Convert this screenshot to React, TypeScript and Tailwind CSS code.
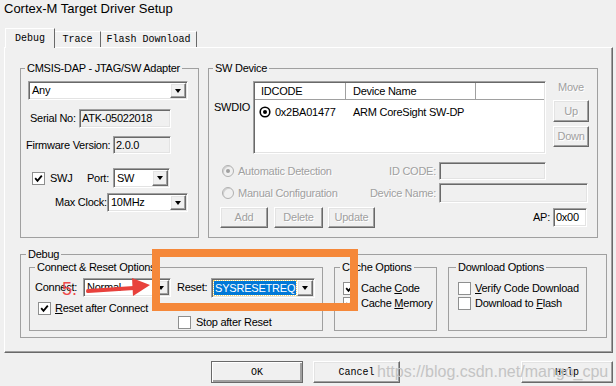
import type { ReactNode } from "react";

const SUNKEN =
  "border border-t-[#a0a0a0] border-l-[#a0a0a0] border-b-white border-r-white shadow-[inset_1px_1px_0_#696969,inset_-1px_-1px_0_#e3e3e3] p-[1px]";
const RAISED =
  "border border-t-white border-l-white border-b-[#696969] border-r-[#696969] shadow-[inset_-1px_-1px_0_#a0a0a0,inset_1px_1px_0_#e3e3e3]";
const DIS = "text-[#a0a0a0] [text-shadow:1px_1px_0_#ffffff]";
const MONO = "font-['Liberation_Mono','Courier_New',monospace] text-[10px] tracking-normal";

function Group({ title, className, legend = "ml-[4px]", children }: { title: string; className: string; legend?: string; children?: ReactNode }) {
  return (
    <fieldset className={`border border-[#a0a0a0] shrink-0 ${className}`}>
      <legend className={`${legend} px-[2px] leading-[13px] whitespace-nowrap`}>{title}</legend>
      {children}
    </fieldset>
  );
}

function Arrow() {
  return (
    <div className={`${RAISED} w-[16px] bg-[#f0f0f0] flex items-center justify-center shrink-0`}>
      <div className="w-0 h-0 border-x-[3.5px] border-x-transparent border-t-[4px] border-t-black" />
    </div>
  );
}

function Combo({ className, children }: { className: string; children?: ReactNode }) {
  return (
    <div className={`${SUNKEN} bg-white flex shrink-0 ${className}`}>
      <div className="flex-1 flex items-center pl-[2px] overflow-hidden whitespace-nowrap">{children}</div>
      <Arrow />
    </div>
  );
}

function Field({ className, children }: { className: string; children?: ReactNode }) {
  return <div className={`${SUNKEN} flex items-center pl-[2px] shrink-0 whitespace-nowrap ${className}`}>{children}</div>;
}

function Btn({ className, children, disabled }: { className: string; children: ReactNode; disabled?: boolean }) {
  return (
    <div className={`${RAISED} flex items-center justify-center shrink-0 ${disabled ? DIS : ""} ${className}`}>
      {children}
    </div>
  );
}

function Check({ on }: { on?: boolean }) {
  return (
    <div className="w-[13px] h-[13px] border border-[#8e8f8f] bg-white flex items-center justify-center shrink-0">
      {on && (
        <svg width="9" height="9" viewBox="0 0 9 9">
          <path d="M1.2 4.2 L3.5 6.8 L7.8 1.6" fill="none" stroke="#000" strokeWidth="1.8" />
        </svg>
      )}
    </div>
  );
}

function Radio({ on }: { on?: boolean }) {
  return (
    <div className="w-[12px] h-[12px] rounded-full border border-[#b0b0b0] bg-[#f0f0f0] shadow-[inset_1px_1px_0_#d0d0d0] flex items-center justify-center shrink-0">
      {on && <div className="w-[4px] h-[4px] rounded-full bg-[#a0a0a0]" />}
    </div>
  );
}

export default function App() {
  return (
    <div className="relative w-[616px] h-[386px] overflow-hidden bg-[#f0f0f0] text-black text-[11px] leading-[13px] tracking-[-0.25px] font-['Liberation_Sans',Arial,sans-serif]">
      <div className="h-[28px] pl-[4px] pt-[1px] text-[13px] leading-[16px] tracking-normal">Cortex-M Target Driver Setup</div>

      {/* tabs */}
      <div className={`flex items-end h-[19px] ml-[5px] ${MONO}`}>
        <div className="relative z-10 -mb-[1px] w-[50px] h-[20px] bg-[#f0f0f0] border-t border-l border-r border-t-white border-l-white border-r-[#696969] flex items-center justify-center">
          Debug
        </div>
        <div className="w-[46px] h-[16px] border-t border-r border-t-white border-r-[#696969] flex items-center justify-center">Trace</div>
        <div className="w-[96px] h-[16px] border-t border-r border-t-white border-r-[#696969] flex items-center justify-center">
          Flash Download
        </div>
      </div>

      {/* tab panel */}
      <div className="ml-[4px] w-[609px] h-[306px] border border-t-white border-l-white border-r-[#696969] border-b-[#696969] shadow-[inset_-1px_-1px_0_#a0a0a0] pl-[15px] pt-[14px] whitespace-nowrap">
        <div className="flex">
          <Group title="CMSIS-DAP - JTAG/SW Adapter" className="w-[179px] h-[176px]">
            <Combo className="mt-[6px] ml-[7px] w-[160px] h-[19px]">Any</Combo>
            <div className="flex items-center mt-[9px]">
              <span className="ml-[9px] w-[49px]">Serial No:</span>
              <Field className="w-[92px] h-[19px]">ATK-05022018</Field>
            </div>
            <div className="flex items-center mt-[8px]">
              <span className="ml-[5px] w-[87px]">Firmware Version:</span>
              <Field className="w-[58px] h-[18px]">2.0.0</Field>
            </div>
            <div className="flex items-center mt-[14px]">
              <div className="ml-[11px]">
                <Check on />
              </div>
              <span className="ml-[5px] w-[37px]">SWJ</span>
              <span className="w-[26px]">Port:</span>
              <Combo className="w-[57px] h-[20px]">SW</Combo>
            </div>
            <div className="flex items-center mt-[5px]">
              <span className="ml-[34px] w-[52px]">Max Clock:</span>
              <Combo className="w-[81px] h-[19px]">10MHz</Combo>
            </div>
          </Group>

          <Group title="SW Device" className="ml-[9px] w-[390px] h-[176px]">
            <div className="flex mt-[6px]">
              <div className="ml-[5px] w-[39px] pt-[20px]">SWDIO</div>
              <div className={`${SUNKEN} w-[293px] h-[73px] bg-white shrink-0`}>
                <div className="flex h-[17px] bg-white">
                  <div className="w-[91px] border-r border-b border-r-[#a0a0a0] border-b-[#a0a0a0] pl-[6px] flex items-center">IDCODE</div>
                  <div className="w-[130px] border-r border-b border-r-[#a0a0a0] border-b-[#a0a0a0] pl-[7px] flex items-center">Device Name</div>
                  <div className="flex-1 border-b border-b-[#a0a0a0]" />
                </div>
                <div className="flex h-[16px] mt-[4px]">
                  <div className="w-[91px] pl-[4px] flex items-center">
                    <svg width="12" height="12" viewBox="0 0 12 12">
                      <circle cx="6" cy="6" r="4.8" fill="#fff" stroke="#000" strokeWidth="1.6" />
                      <circle cx="6" cy="6" r="2" fill="#000" />
                    </svg>
                    <span className="ml-[4px]">0x2BA01477</span>
                  </div>
                  <div className="pl-[7px] flex items-center">ARM CoreSight SW-DP</div>
                </div>
              </div>
              <div className="ml-[7px] w-[36px] flex flex-col items-center">
                <div className={`h-[13px] ${DIS}`}>Move</div>
                <Btn disabled className="mt-[6px] w-[36px] h-[22px]">Up</Btn>
                <Btn disabled className="mt-[4px] w-[36px] h-[21px]">Down</Btn>
              </div>
            </div>

            <div className="flex items-center mt-[8px] h-[18px]">
              <div className={`ml-[13px] w-[140px] flex items-center ${DIS}`}>
                <Radio on />
                <span className="ml-[4px]">Automatic Detection</span>
              </div>
              <span className={`w-[77px] text-right pr-[3px] ${DIS}`}>ID CODE:</span>
              <Field className="w-[107px] h-[18px]" />
            </div>
            <div className="flex items-center mt-[3px] h-[20px]">
              <div className={`ml-[13px] w-[140px] flex items-center ${DIS}`}>
                <Radio />
                <span className="ml-[4px]">Manual Configuration</span>
              </div>
              <span className={`w-[77px] text-right pr-[3px] ${DIS}`}>Device Name:</span>
              <Field className="w-[149px] h-[20px]" />
            </div>
            <div className="flex items-center mt-[4px] h-[21px]">
              <Btn disabled className="ml-[11px] w-[48px] h-[21px]">Add</Btn>
              <Btn disabled className="ml-[6px] w-[49px] h-[21px]">Delete</Btn>
              <Btn disabled className="ml-[5px] w-[47px] h-[21px]">Update</Btn>
              <span className="ml-auto mr-[3px]">AP:</span>
              <Field className="w-[34px] h-[19px] mr-[10px] bg-white">0x00</Field>
            </div>
          </Group>
        </div>

        <Group title="Debug" legend="ml-[5px]" className="mt-[10px] w-[587px] h-[90px]">
          <div className="flex">
            <Group title="Connect & Reset Options" legend="ml-[5px]" className="ml-[8px] w-[294px] h-[70px]">
              <div className="flex items-center mt-[4px] h-[19px]">
                <span className="ml-[5px] w-[48px]">Connect:</span>
                <Combo className="w-[88px] h-[19px]">Normal</Combo>
                <span className="ml-[6px] w-[34px]">Reset:</span>
                <Combo className="w-[104px] h-[20px]">
                  <span className="-ml-[1px] px-[1px] bg-[#0078d7] text-white outline outline-1 outline-dotted outline-[#f5d76e] leading-[14px] tracking-[-0.2px]">
                    SYSRESETREQ
                  </span>
                </Combo>
              </div>
              <div className="flex items-center mt-[5px] h-[13px]">
                <div className="ml-[8px]">
                  <Check on />
                </div>
                <span className="ml-[4px]">
                  <span className="underline">R</span>eset after Connect
                </span>
              </div>
              <div className="flex items-center mt-[1px] h-[13px]">
                <div className="ml-[148px]">
                  <Check />
                </div>
                <span className="ml-[5px]">Stop after Reset</span>
              </div>
            </Group>

            <Group title="Cache Options" legend="ml-[5px]" className="ml-[11px] w-[103px] h-[70px]">
              <div className="flex items-center mt-[7px] h-[15px]">
                <div className="ml-[8px]">
                  <Check on />
                </div>
                <span className="ml-[5px]">
                  Cache <span className="underline">C</span>ode
                </span>
              </div>
              <div className="flex items-center h-[15px]">
                <div className="ml-[8px]">
                  <Check on />
                </div>
                <span className="ml-[5px]">
                  Cache <span className="underline">M</span>emory
                </span>
              </div>
            </Group>

            <Group title="Download Options" legend="ml-[7px]" className="ml-[11px] w-[139px] h-[70px]">
              <div className="flex items-center mt-[7px] h-[15px]">
                <div className="ml-[9px]">
                  <Check />
                </div>
                <span className="ml-[4px]">
                  <span className="underline">V</span>erify Code Download
                </span>
              </div>
              <div className="flex items-center h-[15px]">
                <div className="ml-[9px]">
                  <Check />
                </div>
                <span className="ml-[4px]">
                  Download to <span className="underline">F</span>lash
                </span>
              </div>
            </Group>
          </div>
        </Group>
      </div>

      {/* dialog buttons */}
      <div className={`flex mt-[8px] pl-[211px] pr-[3px] ${MONO}`}>
        <div className="w-[92px] h-[22px] border border-[#696969] shadow-[inset_1px_1px_0_#ffffff,inset_-2px_-2px_0_#a0a0a0] flex items-center justify-center">
          OK
        </div>
        <Btn className="ml-[10px] w-[87px] h-[22px]">Cancel</Btn>
        <Btn className="ml-auto w-[92px] h-[22px]">Help</Btn>
      </div>

      {/* annotation overlays */}
      <div className="absolute left-[152px] top-[249px] w-[206px] h-[62px] border-[8px] border-[#f5883a]" />
      <svg className="absolute left-[84px] top-[276px]" width="70" height="24" viewBox="0 0 70 24">
        <path d="M4 15 L50 12" stroke="#e8413c" strokeWidth="4" strokeLinecap="round" />
        <polygon points="48,2 66,9 49,20" fill="#e8413c" />
      </svg>
      <div className="absolute left-[62px] top-[280px] text-[18px] leading-none text-[#ee4a4a] tracking-normal">5.</div>
      <div className="absolute left-[377px] top-[364px] text-[16px] leading-none tracking-normal text-[#c4c4c4]">
        https://blog.csdn.net/mango_cpu
      </div>
    </div>
  );
}
